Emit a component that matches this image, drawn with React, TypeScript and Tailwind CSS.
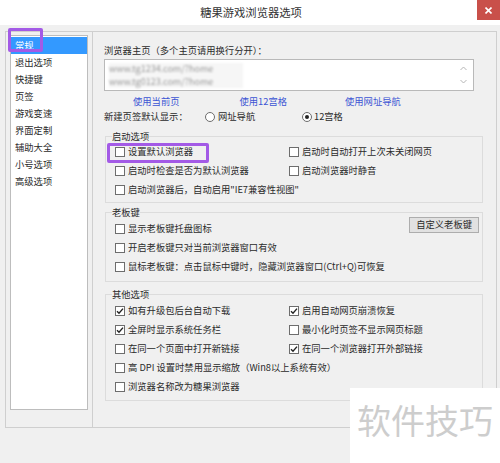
import React from 'react';

const font = { fontFamily: '"Noto Sans CJK SC", "Noto Sans", sans-serif' };

const navItems = ['常规', '退出选项', '快捷键', '页签', '游戏变速', '界面定制', '辅助大全', '小号选项', '高级选项'];

const Box: React.FC<{ checked?: boolean }> = ({ checked }) => (
  <span className="w-[10px] h-[10px] border border-[#6d6d6d] bg-white flex items-center justify-center shrink-0">
    {checked && (
      <svg width="8" height="8" viewBox="0 0 8 8">
        <path d="M1 4.2 L3 6.2 L7 1.6" fill="none" stroke="#222" strokeWidth="1.4" />
      </svg>
    )}
  </span>
);

const Check: React.FC<{ label: string; checked?: boolean; className?: string }> = ({ label, checked, className = 'h-[18px]' }) => (
  <div className={`flex items-center gap-[3px] whitespace-nowrap ${className}`}>
    <Box checked={checked} />
    <span>{label}</span>
  </div>
);

const Group: React.FC<{ title: string; className?: string; children: React.ReactNode }> = ({ title, className = '', children }) => (
  <fieldset className={`border border-[#dcdcdc] ml-[1px] pl-[9px] pr-[3px] ${className}`}>
    <legend className="-ml-[3px] px-0 leading-[16px]">{title}</legend>
    {children}
  </fieldset>
);

const Radio: React.FC<{ checked?: boolean }> = ({ checked }) => (
  <span className="w-[10px] h-[10px] rounded-full border border-[#6d6d6d] bg-white flex items-center justify-center">
    {checked && <span className="w-[4px] h-[4px] rounded-full bg-[#222]"></span>}
  </span>
);

export default function App() {
  return (
    <div className="w-[500px] h-[463px] bg-[#f0f0f0] relative overflow-hidden text-[9.3px] text-[#2b2b2b]" style={font}>
      {/* title bar */}
      <div className="h-[25px] bg-white flex items-center justify-center relative">
        <span className="text-[11.3px] text-[#333] pl-[2px] -mt-[1px]">糖果游戏浏览器选项</span>
        <div className="absolute right-0 top-0 w-[23px] h-[20px] bg-[#c9504a] flex items-center justify-center">
          <svg width="7" height="7" viewBox="0 0 7 7">
            <path d="M0.5 0.5 L6.5 6.5 M6.5 0.5 L0.5 6.5" stroke="#fff" strokeWidth="1.6" />
          </svg>
        </div>
      </div>

      <div className="pt-[6px] pl-[5px] pr-[3px]">
        <div className="h-[397px] border border-[#cfcfcf] flex">
          {/* left nav */}
          <div className="w-[87px] border-r border-[#cfcfcf] pt-[3px] pl-[4px]">
            <div className="w-[78px] h-[375px] bg-white border border-[#bdbdbd]">
              <div className="flex flex-col">
                {navItems.map((n, i) => (
                  <div key={n} className={`h-[17px] leading-[17px] pl-[4px] ${i === 0 ? 'bg-[#3399ff] text-white mt-[1px]' : ''}`}>
                    {n}
                  </div>
                ))}
              </div>
            </div>
          </div>

          {/* right panel */}
          <div className="flex-1 pl-[11px] pr-[13px] pt-[10px]">
            <div className="leading-[16px]">浏览器主页（多个主页请用换行分开）：</div>
            <div className="mt-[1px] mr-[9px] h-[32px] border border-[#b9b9b9] bg-white flex">
              <div className="flex-1 pl-[4px] pt-[3px]">
                <div className="w-[134px] bg-[#f6f6f6] text-[#999] text-[9px] leading-[12.5px] blur-[1px]">
                  <div>www.tg1234.com/?home</div>
                  <div>www.tg0123.com/?home</div>
                </div>
              </div>
              <div className="w-[20px] flex flex-col items-center justify-between py-[6px]">
                <svg width="7" height="5" viewBox="0 0 7 5">
                  <path d="M0.5 4 L3.5 1 L6.5 4" fill="none" stroke="#b5b5b5" strokeWidth="1" />
                </svg>
                <svg width="7" height="5" viewBox="0 0 7 5">
                  <path d="M0.5 1 L3.5 4 L6.5 1" fill="none" stroke="#b5b5b5" strokeWidth="1" />
                </svg>
              </div>
            </div>

            <div className="mt-[4px] h-[14px] flex items-center text-[#3c55d4]">
              <span className="ml-[29px]">使用当前页</span>
              <span className="ml-[60px]">使用12宫格</span>
              <span className="ml-[58px]">使用网址导航</span>
            </div>

            <div className="h-[15px] flex items-center">
              <span className="w-[101px]">新建页签默认显示：</span>
              <Radio />
              <span className="ml-[3px] w-[84px]">网址导航</span>
              <Radio checked />
              <span className="ml-[2px]">12宫格</span>
            </div>

            <Group title="启动选项" className="mt-[4px] pb-[3px]">
              <div className="grid grid-cols-[174px_1fr] gap-y-[1px] -mt-[1px]">
                <Check label="设置默认浏览器" />
                <Check label="启动时自动打开上次未关闭网页" />
                <Check label="启动时检查是否为默认浏览器" />
                <Check label="启动浏览器时静音" />
                <Check label={'启动浏览器后，自动启用"IE7兼容性视图"'} className="h-[18px] col-span-2" />
              </div>
            </Group>

            <Group title="老板键" className="mt-[1px] pb-[5px]">
              <div className="flex items-start justify-between">
                <div className="flex flex-col gap-y-[1px]">
                  <Check label="显示老板键托盘图标" />
                  <Check label="开启老板键只对当前浏览器窗口有效" />
                  <Check label="鼠标老板键：点击鼠标中键时，隐藏浏览器窗口(Ctrl+Q)可恢复" />
                </div>
                <div className="-mt-[3px] h-[16px] px-[6px] border border-[#adadad] bg-[#e1e1e1] flex items-center">
                  自定义老板键
                </div>
              </div>
            </Group>

            <Group title="其他选项" className="mt-[4px] pb-[4px]">
              <div className="grid grid-cols-[174px_1fr] -mt-[1px]">
                <Check label="如有升级包后台自动下载" checked className="h-[19px]" />
                <Check label="启用自动网页崩溃恢复" checked className="h-[19px]" />
                <Check label="全屏时显示系统任务栏" checked className="h-[19px]" />
                <Check label="最小化时页签不显示网页标题" className="h-[19px]" />
                <Check label="在同一个页面中打开新链接" className="h-[19px]" />
                <Check label="在同一个浏览器打开外部链接" checked className="h-[19px]" />
                <Check label="高 DPI 设置时禁用显示缩放（Win8以上系统有效）" className="h-[19px] col-span-2" />
                <Check label="浏览器名称改为糖果浏览器" className="h-[19px] col-span-2" />
              </div>
            </Group>
          </div>
        </div>
      </div>

      {/* highlight marks */}
      <div className="absolute left-[8px] top-[28px] w-[35px] h-[24px] border-[3px] border-[#a35ae6] rounded-[2px]"></div>
      <div className="absolute left-[107px] top-[143px] w-[102px] h-[20px] border-[3px] border-[#a35ae6] rounded-[2px]"></div>

      {/* watermark */}
      <div className="absolute left-[350px] top-[388px] w-[150px] h-[75px] bg-white flex items-start pl-[7px] pt-[12px]">
        <span className="text-[34px] leading-[40px] text-[#cdcdcd]">软件技巧</span>
      </div>
    </div>
  );
}
